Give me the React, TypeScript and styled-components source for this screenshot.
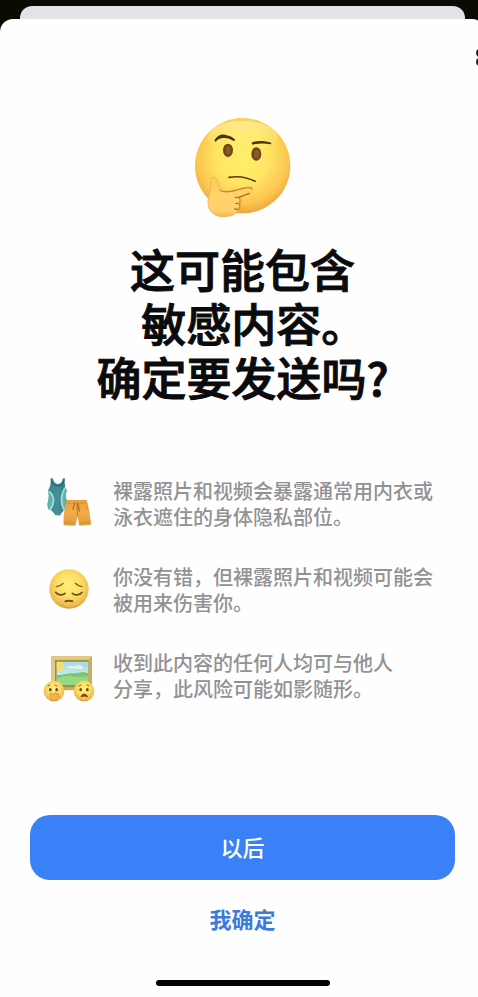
import React from "react";
import styled, { createGlobalStyle } from "styled-components";

const GlobalStyle = createGlobalStyle`
  * { box-sizing: border-box; }
  html, body { margin: 0; padding: 0; }
  body {
    background: #0a0c04;
    overflow: hidden;
    font-family: "Noto Sans CJK SC", sans-serif;
  }
`;

const Viewport = styled.div`
  min-height: 100vh;
  overflow: hidden;
  display: flex;
`;

const Screen = styled.div`
  flex: 0 0 auto;
  width: calc(100% + 7px);
  min-height: 100vh;
  padding-top: 6px;
  display: flex;
  flex-direction: column;
`;

const PreviousCard = styled.div`
  height: 13px;
  margin: 0 20px;
  border-radius: 12px 12px 0 0;
  background: #e3e2e6;
`;

const Sheet = styled.main`
  flex: 1;
  display: flex;
  flex-direction: column;
  background: #fefefe;
  border-radius: 13px 13px 0 0;
  padding-bottom: 11px;
`;

const Header = styled.header`
  display: flex;
  justify-content: flex-end;
  padding-top: 30px;
`;

const CornerButton = styled.button`
  display: flex;
  padding: 0;
  border: 0;
  background: none;
  color: #222;
`;

const Hero = styled.div`
  display: flex;
  justify-content: center;
  margin-top: 51px;
`;

const Title = styled.h1`
  margin: 24px 0 0;
  text-align: center;
  font-size: 45px;
  line-height: 54px;
  font-weight: 500;
  -webkit-text-stroke: 1px #0b0b0d;
  color: #0b0b0d;
  font-feature-settings: "halt";
`;

const Reasons = styled.ul`
  list-style: none;
  margin: 74px 0 0;
  padding: 0 35px;
  display: flex;
  flex-direction: column;
  gap: 34px;
`;

const Reason = styled.li`
  display: flex;
  align-items: center;
  gap: 8px;
`;

const IconSlot = styled.span`
  display: flex;
  flex: none;
  margin: -9px 0;
`;

const ReasonText = styled.p`
  margin: 0;
  font-size: 20px;
  line-height: 26px;
  font-weight: 500;
  color: #929295;
  white-space: nowrap;
`;

const Footer = styled.footer`
  margin-top: auto;
  padding: 0 30px;
  display: flex;
  flex-direction: column;
  align-items: center;
`;

const Action = styled.button<{ $primary?: boolean }>`
  width: 100%;
  height: ${(p) => (p.$primary ? 65 : 44)}px;
  margin-top: ${(p) => (p.$primary ? 0 : 18)}px;
  padding: 0 0 4px;
  border: 0;
  border-radius: 20px;
  background: ${(p) => (p.$primary ? "#3a81f7" : "transparent")};
  color: ${(p) => (p.$primary ? "#fff" : "#3b7bdc")};
  font-family: inherit;
  font-size: 22px;
  line-height: 32px;
  font-weight: ${(p) => (p.$primary ? 500 : 700)};
  cursor: pointer;
`;

const HomeIndicator = styled.div`
  width: 174px;
  height: 6px;
  margin-top: 38px;
  border-radius: 3px;
  background: #030308;
`;

const ThinkingFace = () => (
  <svg width="98" height="101" viewBox="42 36 294 303" role="img" aria-label="思考">
    <defs>
      <radialGradient id="tf" cx="0.5" cy="0.42" r="0.6">
        <stop offset="0" stopColor="#fff06a" />
        <stop offset="0.45" stopColor="#ffe563" />
        <stop offset="0.8" stopColor="#fbc550" />
        <stop offset="1" stopColor="#e8a03a" />
      </radialGradient>
      <linearGradient id="tshine" x1="0" y1="0" x2="0" y2="1">
        <stop offset="0" stopColor="#fff6a8" stopOpacity="0.7" />
        <stop offset="1" stopColor="#fff06a" stopOpacity="0" />
      </linearGradient>
      <linearGradient id="thand" x1="0" y1="0" x2="0" y2="1">
        <stop offset="0" stopColor="#ffc95a" />
        <stop offset="0.5" stopColor="#ffd56b" />
        <stop offset="0.85" stopColor="#ffd06c" />
        <stop offset="1" stopColor="#f1b553" />
      </linearGradient>
    </defs>
    <circle cx="188" cy="182" r="143" fill="url(#tf)" />
    <ellipse cx="188" cy="98" rx="105" ry="50" fill="url(#tshine)" />
    <path d="M103 106C114 89 126 87 137 90C150 92 160 97 166 106L161 108C149 101 141 99 132 99C120 99 114 102 107 111Z" fill="#493511" />
    <path d="M215 113C232 105 253 107 274 113L273 118C253 115 235 115 217 119Z" fill="#493511" />
    <ellipse cx="144" cy="136" rx="15" ry="20" fill="#70451a" />
    <ellipse cx="229" cy="147" rx="15" ry="20" fill="#70451a" />
    <ellipse cx="145" cy="136" rx="8" ry="13" fill="#8a5925" />
    <ellipse cx="230" cy="147" rx="8" ry="13" fill="#8a5925" />
    <path d="M147 217C172 213 202 217 225 229" fill="none" stroke="#5b3a16" strokeWidth="5" strokeLinecap="round" />
    <path d="M113 262C140 267 184 247 215 249M180 276L180 312" fill="none" stroke="#c97826" strokeWidth="8" strokeLinecap="round" opacity="0.25" />
    <path d="M97 217C107 215 113 224 115 236C117 247 119 255 128 259C145 265 165 257 184 252C196 248 207 245 213 248C221 252 218 261 208 265L176 277C183 282 181 291 176 295C182 301 179 309 173 313C172 327 157 335 130 335C102 335 86 318 84 297C83 280 88 268 91 256C94 242 89 222 97 217Z" fill="url(#thand)" stroke="#e6a947" strokeWidth="2" />
    <path d="M119 255C132 264 152 260 168 256C188 250 207 244 216 251" fill="none" stroke="#bb792c" strokeWidth="3" strokeLinecap="round" />
    <path d="M208 265L176 277M166 277L177 278M168 295L176 296M164 312L173 313" fill="none" stroke="#ad6d28" strokeWidth="4" strokeLinecap="round" />
    <path d="M178 279C182 285 180 292 176 295C181 301 179 308 174 313" fill="none" stroke="#c68332" strokeWidth="3" />
  </svg>
);

const SwimwearIcon = () => (
  <svg width="70" height="70" viewBox="0 0 210 210" role="img" aria-label="泳衣和短裤">
    <defs>
      <linearGradient id="suit" x1="0" y1="0" x2="1" y2="0">
        <stop offset="0" stopColor="#34818c" />
        <stop offset="0.5" stopColor="#438f9c" />
        <stop offset="1" stopColor="#2c6b79" />
      </linearGradient>
      <linearGradient id="shorts" x1="0" y1="0" x2="0" y2="1">
        <stop offset="0" stopColor="#e6a044" />
        <stop offset="0.5" stopColor="#f2ad49" />
        <stop offset="1" stopColor="#df993d" />
      </linearGradient>
      <clipPath id="suitShape">
        <path d="M47 28L54 28C56 40 62 45 69 45C77 45 82 40 83 28L89 28C88 46 90 54 95 64C91 78 93 91 98 106L96 119C85 123 79 131 75 140L61 139C57 130 50 123 39 119L37 105C42 90 43 78 39 64C46 54 48 44 47 28Z" />
      </clipPath>
    </defs>
    <g clipPath="url(#suitShape)">
      <rect x="34" y="25" width="68" height="118" fill="url(#suit)" />
      <path d="M36 64C52 74 60 94 45 122H32ZM98 52C78 72 76 104 91 124H102Z" fill="#5fb0ae" />
      <path d="M40 66C58 78 61 100 45 123M92 54C76 76 76 104 89 125" fill="none" stroke="#9fdccb" strokeWidth="6" />
      <path d="M47 26C48 44 58 51 69 51C80 51 87 43 89 26" fill="none" stroke="#2b6773" strokeWidth="4" />
    </g>
    <path d="M95 93L155 93C162 118 167 143 168 167L133 170L128 142L121 170L86 169C84 143 89 117 95 93Z" fill="url(#shorts)" />
    <path d="M93 103L157 103" stroke="#d08c36" strokeWidth="2" />
    <path d="M127 104L127 142" stroke="#bd7929" strokeWidth="3" />
    <path d="M119 101L114 122M128 103L134 128" fill="none" stroke="#a4611e" strokeWidth="3" />
    <path d="M87 160L121 162M134 162L167 159M92 122L98 112M160 122L153 112" stroke="#cb8833" strokeWidth="2" />
  </svg>
);

const YellowGradient = ({ id }: { id: string }) => (
  <radialGradient id={id} cx="0.5" cy="0.4" r="0.6">
    <stop offset="0" stopColor="#fff17e" />
    <stop offset="0.55" stopColor="#fcdc63" />
    <stop offset="0.88" stopColor="#eeb94f" />
    <stop offset="1" stopColor="#cf963f" />
  </radialGradient>
);

const PensiveFace = () => (
  <svg width="70" height="70" viewBox="0 -2 210 210" role="img" aria-label="难过">
    <defs><YellowGradient id="pf" /></defs>
    <circle cx="102" cy="100" r="59" fill="url(#pf)" />
    <path d="M64 93C72 92 79 89 84 83M121 83C127 89 134 92 141 93" fill="none" stroke="#7a5923" strokeWidth="4" strokeLinecap="round" />
    <path d="M62 110C68 119 83 120 90 113M112 113C119 120 135 119 141 110" fill="none" stroke="#6b4a1c" strokeWidth="5" strokeLinecap="round" />
    <path d="M91 137Q101 134 112 137" fill="none" stroke="#74501f" strokeWidth="6" strokeLinecap="round" />
  </svg>
);

const PictureIcon = () => (
  <svg width="70" height="70" viewBox="0 0 210 210" role="img" aria-label="照片和表情">
    <defs>
      <YellowGradient id="lf" />
      <YellowGradient id="rf" />
      <linearGradient id="sky" x1="0" y1="0" x2="0" y2="1">
        <stop offset="0" stopColor="#a3d9e6" />
        <stop offset="1" stopColor="#e4f5e8" />
      </linearGradient>
      <clipPath id="canvas"><path d="M65 62H160V132H65Z" /></clipPath>
    </defs>
    <path d="M48 45H171V148H48Z" fill="#ccb058" />
    <path d="M48 45H171L160 57H62ZM48 45L62 57V148H48Z" fill="#dfc981" />
    <path d="M60 57H161V139H60Z" fill="#a38c49" />
    <path d="M65 62H160V132H65Z" fill="url(#sky)" />
    <g clipPath="url(#canvas)">
      <circle cx="74" cy="75" r="14" fill="#f0e268" />
      <path d="M94 81C102 70 117 79 123 75C130 68 143 74 145 85Z" fill="#e4f3ef" />
      <path d="M65 101C84 104 97 96 113 97C130 97 141 90 160 97V132H65Z" fill="#79c66c" />
      <path d="M65 113C89 98 118 112 160 106V132H65Z" fill="#97d982" />
    </g>
    <circle cx="57" cy="150" r="31" fill="url(#lf)" />
    <circle cx="147" cy="150" r="31" fill="url(#rf)" />
    <path d="M39 135L45 132M60 132L66 135M131 135L138 132M156 132L162 135" stroke="#8b672b" strokeWidth="3" strokeLinecap="round" />
    <ellipse cx="46" cy="146" rx="4" ry="5" fill="#61421a" />
    <ellipse cx="65" cy="146" rx="4" ry="5" fill="#61421a" />
    <path d="M45 163C42 156 49 155 53 159L60 155C64 153 66 157 63 159L69 158C74 158 73 163 69 164C74 165 73 170 68 170C66 179 55 182 49 177C45 173 47 168 45 163Z" fill="#f3b450" stroke="#c98a37" strokeWidth="2" />
    <ellipse cx="137" cy="146" rx="4" ry="5" fill="#654519" />
    <ellipse cx="157" cy="146" rx="4" ry="5" fill="#654519" />
    <path d="M138 168C139 156 156 156 158 168C152 165 145 165 138 168Z" fill="#72451d" stroke="#72451d" strokeWidth="2" />
  </svg>
);

const reasons = [
  { Icon: SwimwearIcon, lines: ["裸露照片和视频会暴露通常用内衣或", "泳衣遮住的身体隐私部位。"] },
  { Icon: PensiveFace, lines: ["你没有错，但裸露照片和视频可能会", "被用来伤害你。"] },
  { Icon: PictureIcon, lines: ["收到此内容的任何人均可与他人", "分享，此风险可能如影随形。"] },
];

export default function App() {
  return (
    <>
      <GlobalStyle />
      <Viewport>
        <Screen>
          <PreviousCard />
          <Sheet>
            <Header>
              <CornerButton type="button" aria-label="更多">
                <svg width="9" height="17" viewBox="0 0 9 17" fill="none" stroke="currentColor" strokeWidth="2">
                  <circle cx="4" cy="4" r="3" />
                  <circle cx="4" cy="13" r="3" />
                </svg>
              </CornerButton>
            </Header>
            <Hero><ThinkingFace /></Hero>
            <Title>
              这可能包含<br />敏感内容。<br />确定要发送吗?
            </Title>
            <Reasons>
              {reasons.map(({ Icon, lines }) => (
                <Reason key={lines[0]}>
                  <IconSlot><Icon /></IconSlot>
                  <ReasonText>{lines[0]}<br />{lines[1]}</ReasonText>
                </Reason>
              ))}
            </Reasons>
            <Footer>
              <Action type="button" $primary>以后</Action>
              <Action type="button">我确定</Action>
              <HomeIndicator />
            </Footer>
          </Sheet>
        </Screen>
      </Viewport>
    </>
  );
}
